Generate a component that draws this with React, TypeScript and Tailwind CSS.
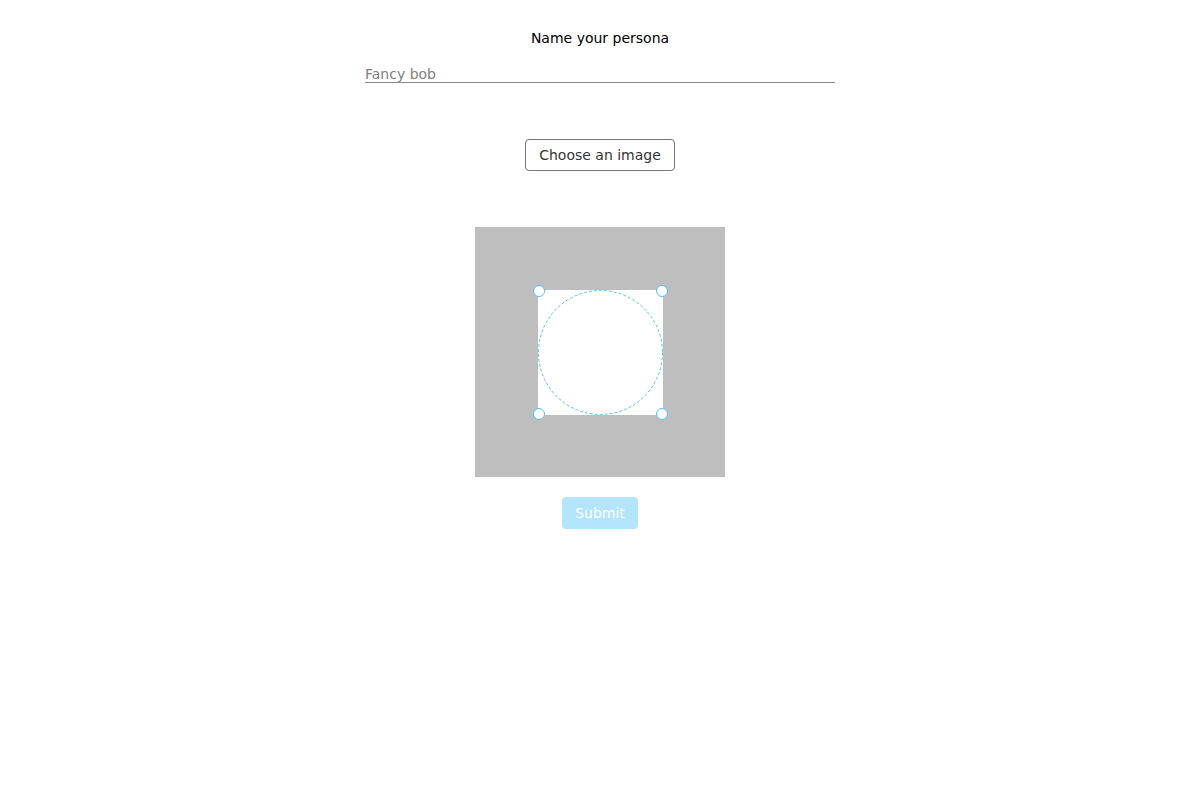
import React from "react";

export default function App() {
  return (
    <div className="flex flex-col items-center bg-white min-h-[800px] text-[14px]" style={{ fontFamily: '"DejaVu Sans", sans-serif' }}>
      <div className="mt-[28px] h-[20px] leading-[20px] text-black">Name your persona</div>
      <input
        className="mt-[15px] w-[470px] h-[20px] border-b border-[#8a8a8a] outline-none text-[14px] leading-[19px] placeholder:text-[#808080] p-0 pt-[2px]"
        placeholder="Fancy bob"
      />
      <button className="mt-[56px] w-[150px] h-[32px] border border-[#767676] rounded-[4px] text-[#333] text-[14px] bg-white">
        Choose an image
      </button>
      <div className="mt-[56px] w-[250px] h-[250px] bg-[#bebebe] relative flex items-center justify-center">
        <div className="w-[125px] h-[125px] bg-white" />
        <svg className="absolute left-0 top-0" width="250" height="250" viewBox="0 0 250 250">
          <circle cx="125.5" cy="125.5" r="62" fill="none" stroke="#4fc3f7" strokeWidth="1" strokeDasharray="3 2" />
          {[
            [64, 64],
            [187, 64],
            [64, 187],
            [187, 187],
          ].map(([x, y], i) => (
            <circle key={i} cx={x} cy={y} r="5.5" fill="white" stroke="#4fc3f7" strokeWidth="1" />
          ))}
        </svg>
      </div>
      <button className="mt-[20px] w-[76px] h-[32px] rounded-[4px] bg-[#b3e5fc] text-white text-[14px]">Submit</button>
    </div>
  );
}
